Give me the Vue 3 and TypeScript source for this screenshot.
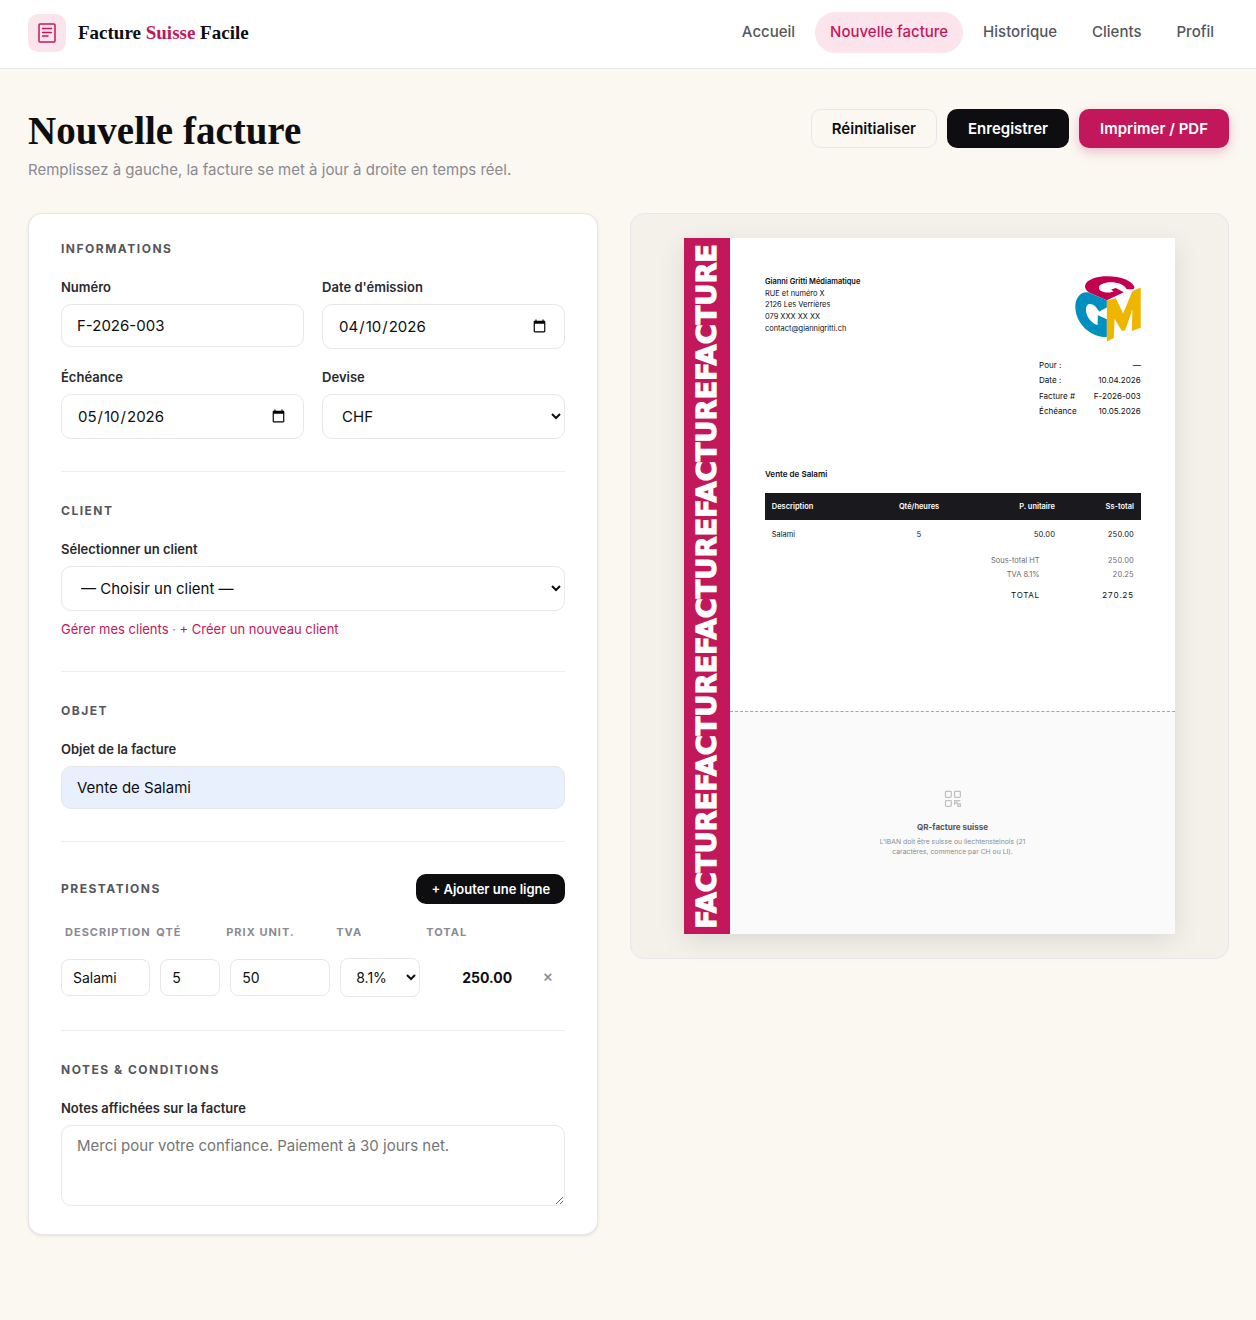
<script setup lang="ts">
import { computed, reactive, ref } from 'vue'

interface Line {
  description: string
  quantity: number
  price: number
  vat: number
}

const navItems = ['Accueil', 'Nouvelle facture', 'Historique', 'Clients', 'Profil']
const activeItem = 'Nouvelle facture'

const invoice = reactive({
  number: 'F-2026-003',
  issued: '2026-04-10',
  due: '2026-05-10',
  currency: 'CHF',
  client: '',
  subject: 'Vente de Salami',
  notes: '',
})

const lines = ref<Line[]>([{ description: 'Salami', quantity: 5, price: 50, vat: 8.1 }])

const issuer = ['RUE et numéro X', '2126 Les Verrières', '079 XXX XX XX', 'contact@giannigritti.ch']

const money = (value: number) => value.toFixed(2)
const lineTotal = (line: Line) => line.quantity * line.price
const swissDate = (iso: string) => iso.split('-').reverse().join('.')

const subtotal = computed(() => lines.value.reduce((sum, l) => sum + lineTotal(l), 0))
const vatTotal = computed(() => lines.value.reduce((sum, l) => sum + (lineTotal(l) * l.vat) / 100, 0))

const meta = computed(() => [
  { label: 'Pour :', value: invoice.client || '—' },
  { label: 'Date :', value: swissDate(invoice.issued) },
  { label: 'Facture #', value: invoice.number },
  { label: 'Échéance', value: swissDate(invoice.due) },
])

const bandText = 'FACTURE'.repeat(5)

function addLine() {
  lines.value.push({ description: '', quantity: 1, price: 0, vat: 8.1 })
}
function removeLine(index: number) {
  lines.value.splice(index, 1)
}
</script>

<template>
  <div class="app">
    <header class="topbar">
      <a class="brand" href="#">
        <span class="brand-mark">
          <svg width="22" height="22" viewBox="0 0 22 22" fill="none" stroke="currentColor" stroke-linecap="round">
            <rect x="3" y="2" width="16" height="18" rx="1" stroke-width="1.5" />
            <path d="M6.5 6.5h9M6.5 10.5h9M6.5 14h5.500" stroke-width="1.3" />
          </svg>
        </span>
        <span class="brand-name">Facture <strong>Suisse</strong> Facile</span>
      </a>
      <nav class="nav">
        <a v-for="item in navItems" :key="item" href="#" :class="{ active: item === activeItem }">{{ item }}</a>
      </nav>
    </header>

    <main class="page">
      <div class="page-head">
        <div>
          <h1>Nouvelle facture</h1>
          <p class="lead">Remplissez à gauche, la facture se met à jour à droite en temps réel.</p>
        </div>
        <div class="actions">
          <button type="button" class="btn ghost">Réinitialiser</button>
          <button type="button" class="btn dark">Enregistrer</button>
          <button type="button" class="btn primary">Imprimer / PDF</button>
        </div>
      </div>

      <div class="columns">
        <form class="card" @submit.prevent>
          <section>
            <h2>Informations</h2>
            <div class="grid-2">
              <div class="field">
                <label for="number">Numéro</label>
                <input id="number" v-model="invoice.number" type="text" />
              </div>
              <div class="field">
                <label for="issued">Date d'émission</label>
                <input id="issued" v-model="invoice.issued" type="date" />
              </div>
              <div class="field">
                <label for="due">Échéance</label>
                <input id="due" v-model="invoice.due" type="date" />
              </div>
              <div class="field">
                <label for="currency">Devise</label>
                <select id="currency" v-model="invoice.currency">
                  <option>CHF</option>
                  <option>EUR</option>
                </select>
              </div>
            </div>
          </section>

          <section>
            <h2>Client</h2>
            <div class="field">
              <label for="client">Sélectionner un client</label>
              <select id="client" v-model="invoice.client">
                <option value="">— Choisir un client —</option>
              </select>
            </div>
            <p class="hint"><a href="#">Gérer mes clients</a> · <a href="#">+ Créer un nouveau client</a></p>
          </section>

          <section>
            <h2>Objet</h2>
            <div class="field">
              <label for="subject">Objet de la facture</label>
              <input id="subject" v-model="invoice.subject" class="autofilled" type="text" />
            </div>
          </section>

          <section>
            <div class="section-head">
              <h2>Prestations</h2>
              <button type="button" class="btn-small" @click="addLine">+ Ajouter une ligne</button>
            </div>
            <div class="lines-head">
              <span>Description</span><span>Qté</span><span>Prix unit.</span><span>TVA</span><span>Total</span><span></span>
            </div>
            <div v-for="(line, i) in lines" :key="i" class="line">
              <input v-model="line.description" type="text" aria-label="Description" />
              <input v-model.number="line.quantity" type="text" inputmode="decimal" aria-label="Quantité" />
              <input v-model.number="line.price" type="text" inputmode="decimal" aria-label="Prix unitaire" />
              <select v-model.number="line.vat" aria-label="TVA">
                <option :value="8.1">8.1%</option>
                <option :value="2.6">2.6%</option>
                <option :value="0">0%</option>
              </select>
              <output class="line-total">{{ money(lineTotal(line)) }}</output>
              <button type="button" class="remove" aria-label="Supprimer la ligne" @click="removeLine(i)">×</button>
            </div>
          </section>

          <section>
            <h2>Notes &amp; conditions</h2>
            <div class="field">
              <label for="notes">Notes affichées sur la facture</label>
              <textarea id="notes" v-model="invoice.notes" placeholder="Merci pour votre confiance. Paiement à 30 jours net."></textarea>
            </div>
          </section>
        </form>

        <div class="preview">
          <article class="sheet">
            <div class="band"><span>{{ bandText }}</span></div>
            <div class="sheet-main">
              <div class="sheet-body">
                <div class="sheet-top">
                  <address>
                    <strong>Gianni Gritti Médiamatique</strong>
                    <span v-for="row in issuer" :key="row">{{ row }}</span>
                  </address>
                  <svg class="logo" viewBox="15 17 198 198" aria-hidden="true">
                    <path fill="#c2004f" d="M111 90 60 68C28 50 50 18 112 18c42 0 76 14 82 32 0 4-2 6-5 7l-18 0c-8-16-36-24-62-20-24 4-28 18-14 26 10 5 26 5 36 1l-7-6 14-5 24 13z" />
                    <path fill="#0090c0" d="M111 90 56 67C34 62 15 82 16 112c2 50 46 90 95 89v-54l-27-12-1 30c-18-4-35-26-35-46 0-20 14-22 28-11l12 16 23-12z" />
                    <path fill="#efb600" d="m111 91 27-7 22 46 28-68 25-10v121l-27 10 2-66-22 64-10 1-22-36-2 58-21 10z" />
                  </svg>
                </div>
                <dl class="meta">
                  <div v-for="m in meta" :key="m.label">
                    <dt>{{ m.label }}</dt>
                    <dd>{{ m.value }}</dd>
                  </div>
                </dl>
                <p class="subject">{{ invoice.subject }}</p>
                <table class="items">
                  <colgroup><col class="c1" /><col class="c2" /><col class="c3" /><col class="c4" /></colgroup>
                  <thead>
                    <tr><th>Description</th><th>Qté/heures</th><th>P. unitaire</th><th>Ss-total</th></tr>
                  </thead>
                  <tbody>
                    <tr v-for="(line, i) in lines" :key="i">
                      <td>{{ line.description }}</td>
                      <td>{{ line.quantity }}</td>
                      <td>{{ money(line.price) }}</td>
                      <td>{{ money(lineTotal(line)) }}</td>
                    </tr>
                  </tbody>
                </table>
                <dl class="totals">
                  <div><dt>Sous-total HT</dt><dd>{{ money(subtotal) }}</dd></div>
                  <div><dt>TVA 8.1%</dt><dd>{{ money(vatTotal) }}</dd></div>
                  <div class="grand"><dt>TOTAL</dt><dd>{{ money(subtotal + vatTotal) }}</dd></div>
                </dl>
              </div>
              <div class="qr">
                <svg width="32" height="32" viewBox="0 0 24 24" fill="none" stroke="currentColor" stroke-width="1.5" aria-hidden="true">
                  <rect x="3" y="3" width="7" height="7" rx="1" />
                  <rect x="14" y="3" width="7" height="7" rx="1" />
                  <rect x="3" y="14" width="7" height="7" rx="1" />
                  <path d="M14 14h3v3h-3zM18 18h3v3h-3zM18 14h3M14 18v1" />
                </svg>
                <strong>QR-facture suisse</strong>
                <p>L'IBAN doit être suisse ou liechtensteinois (21 caractères, commence par CH ou LI).</p>
              </div>
            </div>
          </article>
        </div>
      </div>
    </main>
  </div>
</template>

<style>
body {
  margin: 0;
  background: #fbf8f1;
}
</style>

<style scoped>
.app,
.app * {
  box-sizing: border-box;
}
.app {
  min-height: 100vh;
  background: #fbf8f1;
  color: #0e0e10;
  font-family: Inter, "Liberation Sans", sans-serif;
  font-size: 15px;
}
a {
  text-decoration: none;
}
.topbar {
  display: flex;
  align-items: center;
  justify-content: space-between;
  padding: 12px 27px 15px 28px;
  background: #fff;
  border-bottom: 1px solid #e7e6e9;
}
.brand {
  display: flex;
  align-items: center;
  gap: 12px;
  color: #0e0e10;
}
.brand-mark {
  display: grid;
  place-items: center;
  width: 38px;
  height: 38px;
  border-radius: 10px;
  background: #fce4ec;
  color: #c2185b;
}
.brand-name {
  font: 600 19px/24px "Liberation Serif", serif;
}
.brand-name strong {
  color: #c2185b;
}
.nav {
  display: flex;
  gap: 5px;
}
.nav a {
  padding: 0 15px 1px;
  border-radius: 21px;
  color: #56565c;
  font-weight: 500;
  line-height: 40px;
}
.nav .active {
  background: #fce4ec;
  color: #c2185b;
}

.page {
  padding: 40px 27px 84px 28px;
}
.page-head {
  display: flex;
  align-items: flex-start;
  justify-content: space-between;
  margin-bottom: 33px;
}
h1 {
  margin: 0;
  font: 600 39px/44px "Liberation Serif", serif;
}
.lead {
  margin: 7px 0 0;
  color: #8a8a92;
  line-height: 20px;
}
.actions {
  display: flex;
  gap: 10px;
}
.btn {
  height: 39px;
  padding: 0 20px;
  border: 1px solid transparent;
  border-radius: 10px;
  font: 600 15px/20px Inter, sans-serif;
}
.ghost {
  border-color: #e7e6e9;
  background: transparent;
  color: #0e0e10;
}
.dark {
  background: #0e0e10;
  color: #fff;
}
.primary {
  background: #c2185b;
  color: #fff;
  box-shadow: 0 4px 12px rgba(194, 24, 91, 0.25);
}

.columns {
  display: grid;
  grid-template-columns: minmax(0, 20fr) minmax(0, 21fr);
  gap: 32px;
  align-items: start;
}
.card {
  padding: 28px 32px;
  border: 1px solid #e7e6e9;
  border-radius: 14px;
  background: #fff;
  box-shadow: 0 1px 3px rgba(14, 14, 16, 0.1);
}
section + section {
  margin-top: 32px;
  padding-top: 32px;
  border-top: 1px solid #eeeef0;
}
h2 {
  margin: 0 0 21px;
  color: #56565c;
  font-size: 12px;
  font-weight: 700;
  line-height: 14px;
  letter-spacing: 1.5px;
  text-transform: uppercase;
}
.grid-2 {
  display: grid;
  grid-template-columns: 1fr 1fr;
  gap: 18px;
}
.field {
  display: flex;
  flex-direction: column;
  gap: 7px;
}
label {
  color: #2a2a2e;
  font-size: 13px;
  font-weight: 600;
  line-height: 20px;
}
input,
select,
textarea {
  width: 100%;
  height: 45px;
  padding: 0 15px;
  border: 1px solid #e7e6e9;
  border-radius: 10px;
  background: #fff;
  color: #0e0e10;
  font: 15px/18px Inter, sans-serif;
}
input[type="text"] {
  height: 43px;
}
input.autofilled {
  background: #e8f0fe;
}
textarea {
  display: block;
  height: 81px;
  padding: 11px 15px;
  resize: vertical;
}
textarea::placeholder {
  color: #757575;
}
.hint {
  margin: 8px 0 0;
  color: #8a8a92;
  font-size: 13px;
  line-height: 20px;
}
.hint a {
  color: #c2185b;
}
.section-head {
  display: flex;
  align-items: center;
  justify-content: space-between;
  margin-bottom: 22px;
}
.section-head h2 {
  margin: 0;
}
.btn-small {
  height: 30px;
  padding: 0 15px;
  border: 0;
  border-radius: 10px;
  background: #0e0e10;
  color: #fff;
  font: 600 13px/18px Inter, sans-serif;
}
.lines-head,
.line {
  display: grid;
  grid-template-columns: minmax(0, 1fr) 60px 100px 80px 90px 35px;
  gap: 10px;
  align-items: center;
}
.line {
  min-height: 41px;
}
.lines-head {
  margin-bottom: 19px;
  padding: 0 4px;
  color: #8a8a92;
  font-size: 11px;
  font-weight: 700;
  line-height: 12px;
  letter-spacing: 1px;
  text-transform: uppercase;
}
.line input,
.line select {
  height: 37px;
  padding: 0 11px;
  border-radius: 8px;
  font-size: 14px;
}
.line select {
  height: 39px;
}
.line-total {
  padding-right: 8px;
  font-size: 14px;
  font-weight: 700;
  text-align: right;
}
.remove {
  height: 28px;
  padding: 0 0 3px;
  border: 0;
  background: none;
  color: #8a8a92;
  font: 500 16px/20px Inter, sans-serif;
}

.preview {
  display: flex;
  justify-content: center;
  padding: 24px;
  border: 1px solid #e7e6e9;
  border-radius: 14px;
  background: #f3f1e9;
}
/* A4 page, shown at 62% of its printed size */
.sheet {
  display: flex;
  width: 793px;
  height: 1123px;
  zoom: 0.62;
  background: #fff;
  box-shadow: 0 12px 40px rgba(14, 14, 16, 0.1);
  font-size: 12px;
  line-height: 18px;
}
.band {
  display: flex;
  flex: none;
  align-items: center;
  justify-content: center;
  width: 74px;
  overflow: hidden;
  background: #c2185b;
  color: #fff;
}
.band span {
  font-family: "DejaVu Sans", sans-serif;
  font-size: 44px;
  font-weight: 700;
  line-height: 74px;
  writing-mode: vertical-rl;
  transform: rotate(180deg);
  white-space: nowrap;
  -webkit-text-stroke: 2px #fff;
}
.sheet-main {
  display: flex;
  flex: 1;
  flex-direction: column;
}
.sheet-body {
  flex: 1;
  padding: 61px 56px 0 57px;
}
.sheet-top {
  display: flex;
  justify-content: space-between;
}
address {
  display: flex;
  flex-direction: column;
  font-style: normal;
  line-height: 19px;
}
address strong {
  font-weight: 600;
}
.logo {
  width: 106px;
  height: 106px;
}
dl,
dd {
  margin: 0;
}
.meta {
  width: 164px;
  margin: 26px 0 0 auto;
  font-size: 13px;
}
.meta div {
  display: flex;
  justify-content: space-between;
  padding: 3px 0;
  line-height: 19px;
}
.subject {
  margin: 80px 0 20px;
  font-size: 13px;
  font-weight: 600;
}
.items {
  width: 100%;
  border-collapse: collapse;
  table-layout: fixed;
}
.items td,
.totals dd {
  font-variant-numeric: tabular-nums;
}
.c1 { width: 32%; }
.c2 { width: 18%; }
.c3 { width: 29%; }
.c4 { width: 21%; }
.items th,
.items td {
  padding: 13px 11px;
  text-align: right;
}
.items td {
  padding: 14px 11px;
}
.items th {
  background: #1a1a1e;
  color: #fff;
  font-weight: 600;
}
.items th:first-child,
.items td:first-child {
  text-align: left;
}
.items th:nth-child(2),
.items td:nth-child(2) {
  text-align: center;
}
.totals div {
  display: flex;
  justify-content: flex-end;
  padding: 2px 11px;
  color: #6a6a70;
  line-height: 19px;
  text-align: right;
}
.totals {
  margin-top: 8px;
}
.totals dd {
  width: 152px;
}
.totals .grand {
  margin-top: 11px;
  color: #0e0e10;
  font-size: 13px;
  letter-spacing: 1px;
}
.qr {
  display: flex;
  flex-direction: column;
  align-items: center;
  justify-content: center;
  height: 360px;
  border-top: 2px dashed #a4a4a4;
  background: #fafafa;
  color: #c0c0c4;
  text-align: center;
}
.qr strong {
  margin-top: 21px;
  color: #56565c;
  font-size: 13px;
  font-weight: 700;
}
.qr p {
  width: 260px;
  margin: 6px 0 0;
  color: #8a8a92;
  font-size: 11px;
  line-height: 16px;
}
</style>
